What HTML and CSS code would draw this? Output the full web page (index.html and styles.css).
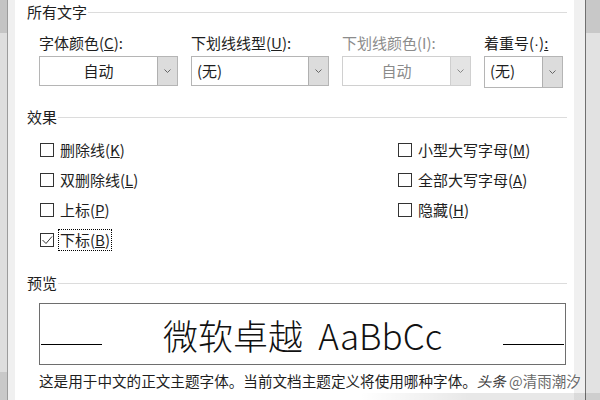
FILE: index.html
```html
<!DOCTYPE html>
<html lang="zh-CN">
<head>
<meta charset="utf-8">
<title>字体</title>
<link rel="stylesheet" href="styles.css">
</head>
<body>
<div class="screen">
  <div class="edge-left"></div>
  <div class="gutter-left"></div>
  <main class="dialog">
    <section class="group">
      <h2 class="group-title">所有文字</h2>
      <div class="combos">
        <div class="field">
          <span class="field-label">字体颜色(<u>C</u>):</span>
          <div class="combo">
            <span class="combo-value centered">自动</span>
            <span class="combo-btn"><svg width="7" height="4" viewBox="0 0 7 4"><polyline points="0.5,0.5 3.5,3.5 6.5,0.5" fill="none" stroke="#666" stroke-width="1"/></svg></span>
          </div>
        </div>
        <div class="field">
          <span class="field-label">下划线线型(<u>U</u>):</span>
          <div class="combo">
            <span class="combo-value">(无)</span>
            <span class="combo-btn"><svg width="7" height="4" viewBox="0 0 7 4"><polyline points="0.5,0.5 3.5,3.5 6.5,0.5" fill="none" stroke="#666" stroke-width="1"/></svg></span>
          </div>
        </div>
        <div class="field disabled">
          <span class="field-label">下划线颜色(I):</span>
          <div class="combo">
            <span class="combo-value centered">自动</span>
            <span class="combo-btn"><svg width="7" height="4" viewBox="0 0 7 4"><polyline points="0.5,0.5 3.5,3.5 6.5,0.5" fill="none" stroke="#888" stroke-width="1"/></svg></span>
          </div>
        </div>
        <div class="field">
          <span class="field-label">着重号(<span class="latin">·</span>)<u>:</u></span>
          <div class="combo tall">
            <span class="combo-value">(无)</span>
            <span class="combo-btn"><svg width="7" height="4" viewBox="0 0 7 4"><polyline points="0.5,0.5 3.5,3.5 6.5,0.5" fill="none" stroke="#666" stroke-width="1"/></svg></span>
          </div>
        </div>
      </div>
    </section>

    <section class="group">
      <h2 class="group-title effects-title">效果</h2>
      <div class="checks">
        <div class="check"><span class="box"></span><span class="check-label">删除线(<u>K</u>)</span></div>
        <div class="check"><span class="box"></span><span class="check-label">小型大写字母(<u>M</u>)</span></div>
        <div class="check"><span class="box"></span><span class="check-label">双删除线(<u>L</u>)</span></div>
        <div class="check"><span class="box"></span><span class="check-label">全部大写字母(<u>A</u>)</span></div>
        <div class="check"><span class="box"></span><span class="check-label">上标(<u>P</u>)</span></div>
        <div class="check"><span class="box"></span><span class="check-label">隐藏(<u>H</u>)</span></div>
        <div class="check"><span class="box"><svg width="12" height="12" viewBox="0 0 12 12"><polyline points="1.5,6 5,9.5 11,2.5" fill="none" stroke="#333" stroke-width="1"/></svg></span><span class="check-label focused">下标(<u>B</u>)</span></div>
      </div>
    </section>

    <section class="group">
      <h2 class="group-title preview-title">预览</h2>
      <div class="preview">
        <span class="preview-line"></span>
        <span class="preview-text">微软卓越&nbsp; AaBbCc</span>
        <span class="preview-line"></span>
      </div>
      <p class="note">这是用于中文的正文主题字体。当前文档主题定义将使用哪种字体。<span class="watermark"><i class="wm-brand">头条</i> <span class="wm-user">@清雨潮汐</span></span></p>
    </section>
  </main>
  <div class="gutter-right"></div>
  <div class="edge-right"></div>
</div>
</body>
</html>
```

FILE: styles.css
```css
* { box-sizing: border-box; }

html, body {
  margin: 0;
  padding: 0;
  background: #ffffff;
}

body {
  width: 600px;
  height: 400px;
  overflow: hidden;
  font-family: "Noto Sans CJK SC", "Microsoft YaHei", "Noto Sans", sans-serif;
  font-size: 15px;
  color: #1e1e1e;
}

.screen {
  position: relative;
  display: flex;
  height: 400px;
}

.screen::after {
  content: "";
  position: absolute;
  left: 360px;
  right: 0;
  bottom: 0;
  height: 7px;
  background: linear-gradient(to right, rgba(0,0,0,0), rgba(0,0,0,0.09) 45%);
  pointer-events: none;
  z-index: 2;
}

.edge-left {
  flex: 0 0 8px;
  background: linear-gradient(to bottom, #c4c4c4 0, #c4c4c4 33px, #dedede 33px, #dedede 372px, #c9c9c9 372px);
  border-right: 1px solid #9c9c9c;
}

.gutter-left {
  flex: 0 0 7px;
  background: #f0f0f0;
}

.dialog {
  position: relative;
  z-index: 1;
  flex: 1 1 auto;
  min-width: 0;
  background: #ffffff;
  padding: 2px 7px 0 12px;
  display: flex;
  flex-direction: column;
}

.gutter-right {
  flex: 0 0 12px;
  background: #f0f0f0;
  border-right: 1px solid #707070;
}

.edge-right {
  flex: 0 0 14px;
  background: linear-gradient(to bottom, #c8c8c8 0, #c8c8c8 33px, #e2e2e2 33px);
}

.latin { font-family: "Liberation Sans", sans-serif; }

.group-title {
  display: flex;
  align-items: center;
  margin: 0;
  height: 20px;
  font-size: 15px;
  font-weight: normal;
  line-height: 20px;
}

.group-title::after {
  content: "";
  flex: 1;
  height: 1px;
  margin-left: 1px;
  background: #dcdcdc;
}

.effects-title { margin-top: 19px; }
.preview-title { margin-top: 18px; }

/* combos */
.combos {
  display: grid;
  grid-template-columns: 139px 138px 129px 79px;
  column-gap: 13px;
  margin: 11px 0 0 12px;
}

.field {
  display: flex;
  flex-direction: column;
  gap: 3px;
}

.field-label {
  height: 20px;
  line-height: 20px;
  white-space: nowrap;
}

.combo {
  display: flex;
  height: 30px;
  border: 1px solid #b5b5b5;
  background: #fff;
}

.combo.tall { height: 32px; }

.combo-value {
  flex: 1;
  line-height: 28px;
  padding-left: 5px;
}

.combo-value.centered {
  text-align: center;
  padding-left: 0;
}

.combo-btn {
  width: 20px;
  display: flex;
  align-items: center;
  justify-content: center;
  background: #dcdcdc;
  border-left: 1px solid #b0b0b0;
}

.disabled .field-label { color: #8c8c8c; }
.disabled .combo { border-color: #d0d0d0; }
.disabled .combo-value { color: #8a8a8a; }
.disabled .combo-btn { background: #e4e4e4; border-left-color: #cfcfcf; }

/* checkboxes */
.checks {
  display: grid;
  grid-template-columns: 358px 1fr;
  grid-auto-rows: 30px;
  margin: 8px 0 0 13px;
}

.check {
  display: flex;
  align-items: center;
}

.box {
  width: 14px;
  height: 14px;
  border: 1px solid #333;
  background: #fff;
  display: flex;
  align-items: center;
  justify-content: center;
}

.check-label {
  margin-left: 4px;
  padding: 1px 1px;
  line-height: 18px;
  border: 1px solid transparent;
  white-space: nowrap;
}

.check-label.focused {
  border: 1px dotted #000;
}

/* preview */
.preview {
  display: flex;
  align-items: flex-start;
  margin: 10px 0 0 12px;
  width: 527px;
  height: 62px;
  border: 1px solid #6e6e6e;
  padding: 0 1px;
}

.preview-line {
  flex: 0 0 61px;
  height: 1px;
  margin-top: 40px;
  background: #000;
}

.preview-text {
  flex: 1;
  text-align: center;
  font-size: 35px;
  font-weight: 300;
  line-height: 36px;
  margin-top: 13px;
  color: #111;
  white-space: nowrap;
}

.note {
  margin: 6px 0 0 12px;
  font-size: 14.6px;
  line-height: 20px;
  white-space: nowrap;
}

.watermark {
  font-size: 14.5px;
  text-shadow: 0 0 2px #fff, 0 0 1px #fff;
}

.wm-brand {
  color: #3a3a3a;
}

.wm-user {
  color: #6a6a6a;
}
```
